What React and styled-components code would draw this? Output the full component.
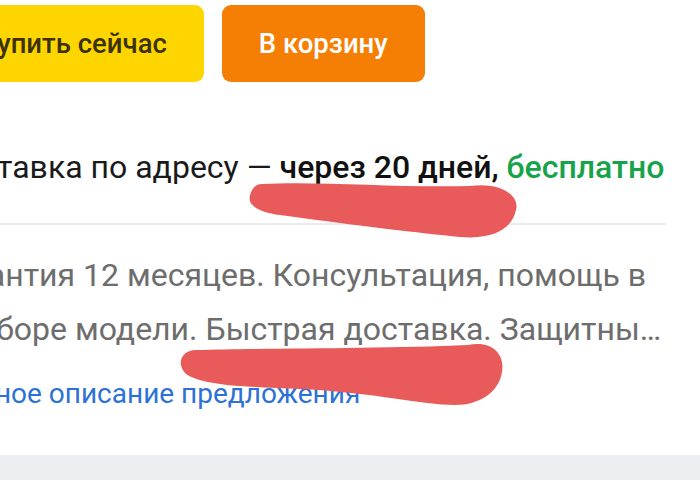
import React from 'react'
import styled, { createGlobalStyle } from 'styled-components'

const GlobalStyle = createGlobalStyle`
  html, body {
    margin: 0;
    padding: 0;
    background: #ffffff;
    overflow: hidden;
  }
  body {
    font-family: Roboto, 'Noto Sans', Arial, sans-serif;
  }
`

const Page = styled.div`
  position: relative;
  width: 700px;
  height: 480px;
  overflow: hidden;
  display: flex;
  flex-direction: column;
  background: #ffffff;
`

const Content = styled.div`
  display: flex;
  flex-direction: column;
  margin-left: -62px;
`

const Actions = styled.div`
  display: flex;
  gap: 18px;
  padding-top: 5px;
  margin-left: 5px;
`

const Button = styled.button`
  height: 77px;
  padding: 0 ${(p) => p.$pad}px;
  border: none;
  border-radius: 9px;
  background: ${(p) => p.$bg};
  color: ${(p) => p.$fg};
  font-family: Roboto, sans-serif;
  font-size: 27.5px;
  font-weight: 500;
  white-space: nowrap;
`

const Delivery = styled.div`
  margin-top: 67px;
  font-size: 32px;
  line-height: 36px;
  color: #1a1a1a;
  white-space: nowrap;
  strong {
    font-weight: 500;
    color: #111111;
  }
`

const Free = styled.span`
  color: #17a34a;
  font-weight: 500;
`

const Divider = styled.div`
  margin-top: 38px;
  width: 728px;
  height: 2px;
  background: #ececec;
`

const Description = styled.div`
  margin-top: 23px;
  font-size: 32px;
  line-height: 54px;
  color: #6d6d6d;
  white-space: nowrap;
`

const Line = styled.span`
  display: block;
  padding-left: ${(p) => p.$indent || 0}px;
`

const MoreLink = styled.a`
  margin: 18px 0 0 5px;
  font-size: 28px;
  line-height: 40px;
  color: #2c72d6;
  text-decoration: none;
  white-space: nowrap;
`

const Band = styled.div`
  margin-top: auto;
  height: 25px;
  background: #eceef1;
`

const Scribbles = styled.svg`
  position: absolute;
  inset: 0;
  pointer-events: none;
`

export default function App() {
  return (
    <>
      <GlobalStyle />
      <Page>
        <Content>
          <Actions>
            <Button $bg="#ffd500" $fg="#3a3200" $pad={37}>Купить сейчас</Button>
            <Button $bg="#f57f04" $fg="#ffffff" $pad={37}>В корзину</Button>
          </Actions>
          <Delivery>
            Доставка по адресу — <strong>через 20 дней,</strong> <Free>бесплатно</Free>
          </Delivery>
          <Divider />
          <Description>
            <Line>Гарантия 12 месяцев. Консультация, помощь в</Line>
            <Line $indent={15}>выборе модели. Быстрая доставка. Защитны…</Line>
          </Description>
          <MoreLink href="#">Полное описание предложения</MoreLink>
        </Content>
        <Band />
        <Scribbles width="700" height="480" viewBox="0 0 700 480">
          <path
            fill="#e95b5b"
            d="M262 184 C320 181 400 188 470 186 C500 182 520 195 516 210 C512 228 495 240 460 237 C420 233 360 226 280 215 C258 212 247 205 250 195 C252 188 256 184 262 184 Z"
          />
          <path
            fill="#e95b5b"
            d="M196 350 C260 348 380 349 468 345 C493 340 505 355 502 372 C499 392 480 405 455 405 C420 405 380 393 300 389 C250 387 200 386 185 373 C176 363 182 350 196 350 Z"
          />
        </Scribbles>
      </Page>
    </>
  )
}
